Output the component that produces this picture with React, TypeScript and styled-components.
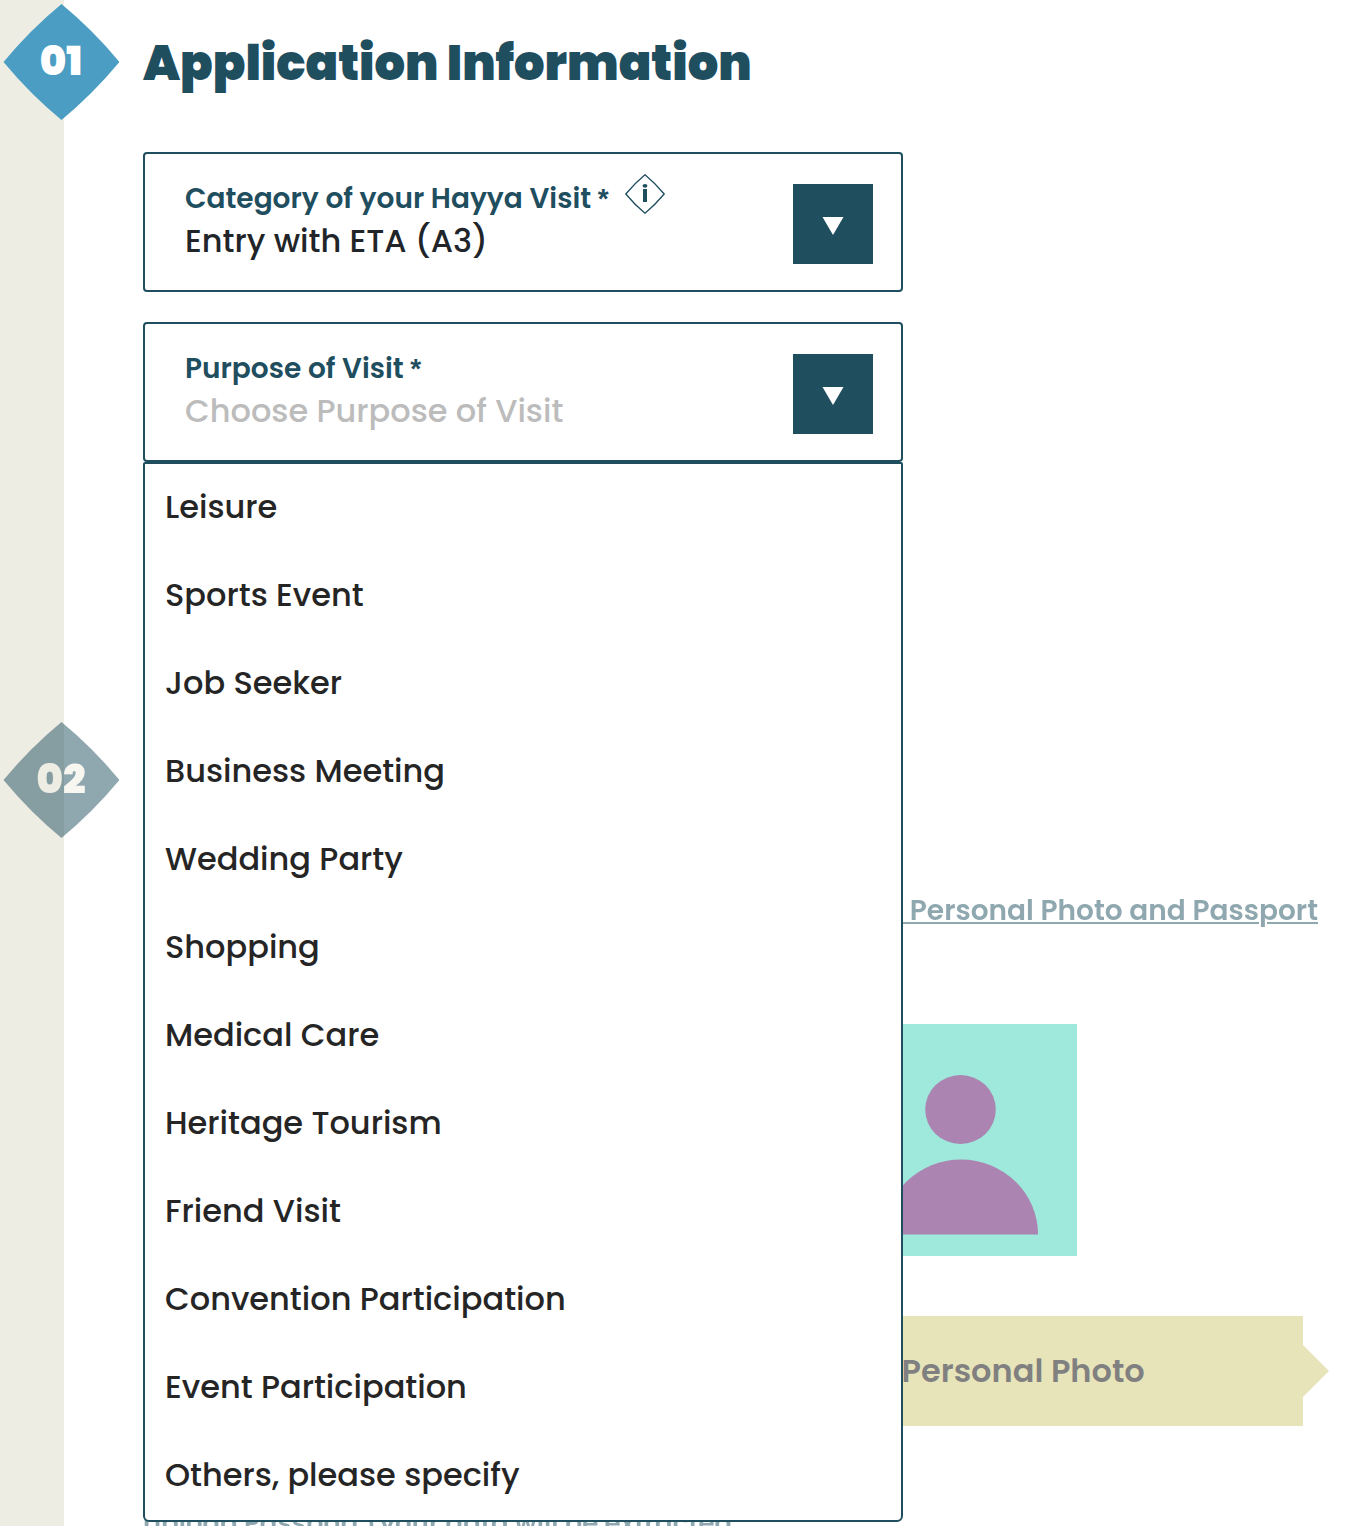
import React, { useState } from "react";
import styled, { createGlobalStyle } from "styled-components";

const navy = "#1f4e5f";
const sand = "#eeede3";
const fontStack = `Poppins, Inter, "Open Sans", sans-serif`;

const GlobalStyle = createGlobalStyle`
  *, *::before, *::after { box-sizing: border-box; }
  body {
    margin: 0;
    font-family: ${fontStack};
    background: #fff;
    color: #212529;
  }
`;

const Page = styled.main`
  height: 100vh;
  overflow: hidden;
  padding-top: 4px;
  background: linear-gradient(to right, ${sand} 64px, #fff 64px);
`;

const Step = styled.section<{ $muted?: boolean }>`
  display: flex;
  align-items: flex-start;
  gap: 24px;
  padding-left: 3px;
  opacity: ${(p) => (p.$muted ? 0.5 : 1)};
  position: relative;
  z-index: ${(p) => (p.$muted ? 0 : 1)};
`;

const Marker = styled.div<{ $color: string }>`
  display: grid;
  place-items: center;
  flex: none;
  width: 116px;
  height: 116px;
  color: ${(p) => p.$color};

  > * { grid-area: 1 / 1; }
`;

const Numeral = styled.span`
  padding-bottom: 2px;
  font-size: 40px;
  font-weight: 900;
  line-height: 48px;
`;

const StepBody = styled.div`
  flex: 1;
  min-width: 0;
`;

const Title = styled.h1`
  margin: 0 0 28px;
  color: ${navy};
  font-size: 48px;
  font-weight: 900;
  line-height: 120px;
`;

const Fields = styled.div`
  display: flex;
  flex-direction: column;
  gap: 30px;
  max-width: 760px;
  padding-bottom: 260px;
`;

const FieldWrap = styled.div`
  position: relative;
`;

const Field = styled.div`
  display: flex;
  align-items: flex-start;
  justify-content: space-between;
  gap: 20px;
  height: 140px;
  padding: 30px 28px 26px 40px;
  border: 2px solid ${navy};
  border-radius: 4px;
  background: #fff;
`;

const FieldText = styled.div`
  flex: 1;
  min-width: 0;
`;

const LabelRow = styled.div`
  display: flex;
  align-items: center;
  gap: 16px;
  height: 30px;
`;

const Label = styled.label`
  color: ${navy};
  font-size: 28px;
  font-weight: 600;
  line-height: 28px;
`;

const Required = styled.span`
  font-family: "Liberation Sans", Arial, sans-serif;
  font-weight: 700;
`;

const InfoButton = styled.button`
  display: flex;
  margin: 0 0 10px;
  padding: 0;
  border: 0;
  background: none;
  cursor: pointer;
`;

const Select = styled.select<{ $empty?: boolean }>`
  display: block;
  width: 100%;
  height: 54px;
  margin: 0;
  padding: 0;
  border: 0;
  outline: 0;
  appearance: none;
  background: none;
  color: ${(p) => (p.$empty ? "#bcbcbc" : "#212529")};
  font: 500 32px/54px ${fontStack};
`;

const Toggle = styled.button`
  display: grid;
  place-items: center;
  flex: none;
  width: 80px;
  height: 80px;
  padding: 4px 0 0;
  border: 0;
  background: ${navy};
  cursor: pointer;
`;

const Menu = styled.ul`
  position: absolute;
  top: 100%;
  left: 0;
  right: 0;
  z-index: 2;
  margin: 0;
  padding: 0;
  list-style: none;
  border: 2px solid ${navy};
  border-radius: 2px 2px 6px 6px;
  background: #fff;
`;

const Option = styled.button`
  display: block;
  width: 100%;
  height: 88px;
  padding: 0 20px 2px;
  border: 0;
  background: none;
  color: #252525;
  font: 500 32px/86px ${fontStack};
  text-align: left;
  cursor: pointer;
`;

const UploadBody = styled(StepBody)`
  padding: 169px 32px 0 0;
`;

const Guidelines = styled.a`
  display: block;
  width: fit-content;
  margin-left: auto;
  color: ${navy};
  font-size: 28px;
  font-weight: 600;
  line-height: 40px;
  text-decoration-thickness: 2px;
  text-underline-offset: 2px;
`;

const Upload = styled.div`
  display: flex;
  flex-direction: column;
  align-items: center;
  gap: 60px;
  width: 684px;
  margin: 93px 15px 0 auto;
`;

const UploadButton = styled.button`
  position: relative;
  width: 100%;
  height: 110px;
  padding: 0;
  border: 0;
  background: #d1c973;
  color: #000;
  font: 600 32px/110px ${fontStack};
  cursor: pointer;

  &::after {
    content: "";
    position: absolute;
    top: 29px;
    left: 100%;
    width: 26px;
    height: 52px;
    background: inherit;
    clip-path: polygon(0 0, 100% 50%, 0 100%);
  }
`;

const PassportNote = styled.p`
  margin: 77px 0 0;
  color: ${navy};
  font-size: 26px;
  font-weight: 600;
  line-height: 40px;
`;

const purposes = [
  "Leisure",
  "Sports Event",
  "Job Seeker",
  "Business Meeting",
  "Wedding Party",
  "Shopping",
  "Medical Care",
  "Heritage Tourism",
  "Friend Visit",
  "Convention Participation",
  "Event Participation",
  "Others, please specify",
];

function StepMarker({ number, fill, color }: { number: string; fill: string; color: string }) {
  return (
    <Marker $color={color}>
      <svg width="116" height="116" viewBox="0 0 116 116" fill={fill} aria-hidden="true">
        <path d="M58.500 0Q90 26 116.500 58Q90 90 58.500 116Q27 90 .5 58Q27 26 58.500 0Z" />
      </svg>
      <Numeral>{number}</Numeral>
    </Marker>
  );
}

function Arrow() {
  return (
    <svg width="22" height="18" viewBox="0 0 22 18" fill="#fff" aria-hidden="true">
      <path d="M.5 0H21.500L11 18Z" />
    </svg>
  );
}

function InfoIcon() {
  return (
    <svg width="40" height="40" viewBox="0 0 40 40" fill="none" aria-hidden="true">
      <path
        d="M20 .8Q30.500 9.500 39.200 20Q30.500 30.500 20 39.200Q9.500 30.500 .8 20Q9.500 9.500 20 .8Z"
        stroke={navy}
        strokeWidth="1.3"
      />
      <path d="M18 15h4V28h-4z" fill={navy} />
      <ellipse cx="20" cy="11.800" rx="2.400" ry="1.900" fill={navy} />
    </svg>
  );
}

export default function App() {
  const [open, setOpen] = useState(true);
  const [purpose, setPurpose] = useState("");

  return (
    <>
      <GlobalStyle />
      <Page>
        <Step>
          <StepMarker number="01" fill="#4b9dc3" color="#fff" />
          <StepBody>
            <Title>Application Information</Title>
            <Fields>
              <Field>
                <FieldText>
                  <LabelRow>
                    <Label htmlFor="category">
                      Category of your Hayya Visit <Required>*</Required>
                    </Label>
                    <InfoButton type="button" aria-label="About visit categories">
                      <InfoIcon />
                    </InfoButton>
                  </LabelRow>
                  <Select id="category" defaultValue="a3">
                    <option value="a3">Entry with ETA (A3)</option>
                  </Select>
                </FieldText>
                <Toggle type="button" aria-label="Show categories">
                  <Arrow />
                </Toggle>
              </Field>
              <FieldWrap>
                <Field>
                  <FieldText>
                    <LabelRow>
                      <Label htmlFor="purpose">
                        Purpose of Visit <Required>*</Required>
                      </Label>
                    </LabelRow>
                    <Select
                      id="purpose"
                      $empty={!purpose}
                      value={purpose}
                      onChange={(e) => setPurpose(e.target.value)}
                    >
                      <option value="">Choose Purpose of Visit</option>
                      {purposes.map((p) => (
                        <option key={p}>{p}</option>
                      ))}
                    </Select>
                  </FieldText>
                  <Toggle
                    type="button"
                    aria-label="Show purposes"
                    aria-expanded={open}
                    onClick={() => setOpen(!open)}
                  >
                    <Arrow />
                  </Toggle>
                </Field>
                {open && (
                  <Menu>
                    {purposes.map((p) => (
                      <li key={p}>
                        <Option
                          type="button"
                          onClick={() => {
                            setPurpose(p);
                            setOpen(false);
                          }}
                        >
                          {p}
                        </Option>
                      </li>
                    ))}
                  </Menu>
                )}
              </FieldWrap>
            </Fields>
          </StepBody>
        </Step>

        <Step $muted>
          <StepMarker number="02" fill={navy} color={sand} />
          <UploadBody>
            <Guidelines href="#guidelines">Guidelines for Personal Photo and Passport</Guidelines>
            <Upload>
              <svg width="232" height="232" viewBox="0 0 232 232" role="img" aria-label="Personal photo">
                <rect width="232" height="232" fill="#3dd3b7" />
                <ellipse cx="115.500" cy="85.500" rx="35.300" ry="34.500" fill="#570963" />
                <path d="M39 210.500a77 75 0 0 1 154 0z" fill="#570963" />
              </svg>
              <UploadButton type="button">Upload Personal Photo</UploadButton>
            </Upload>
            <PassportNote>Upload Passport (your data will be extracted</PassportNote>
          </UploadBody>
        </Step>
      </Page>
    </>
  );
}
